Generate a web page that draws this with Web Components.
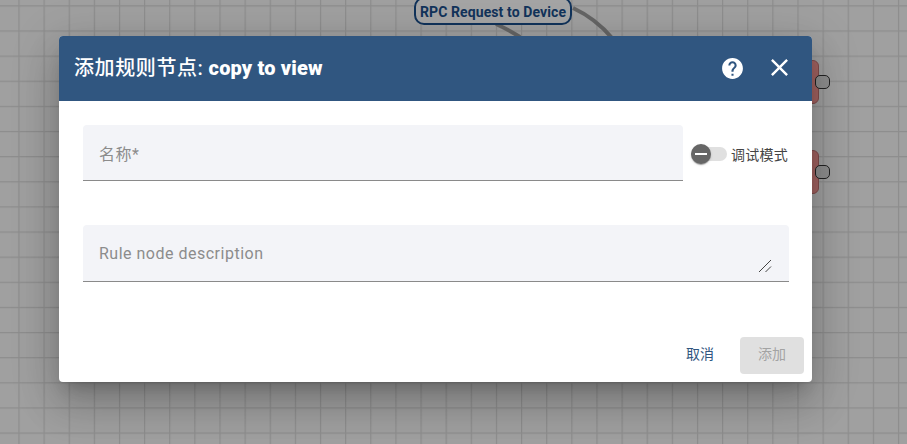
<!DOCTYPE html>
<html>
<head>
<meta charset="utf-8">
<style>
  html, body { margin: 0; padding: 0; width: 907px; height: 444px; overflow: hidden; }
  body { font-family: Roboto, "Noto Sans CJK SC", sans-serif; }
</style>
</head>
<body>
<rule-canvas>
  <add-node-dialog prefix="添加规则节点:" heading="copy to view">
    <text-field label="名称*" slot="name"></text-field>
    <debug-toggle slot="name">调试模式</debug-toggle>
    <text-field label="Rule node description" multiline slot="description"></text-field>
  </add-node-dialog>
</rule-canvas>

<script>
(function () {
  const FONT = 'Roboto, "Noto Sans CJK SC", sans-serif';

  // canvas behind the dialog: grid, the node label, the wires and the two nodes
  class RuleCanvas extends HTMLElement {
    constructor() {
      super();
      this.attachShadow({mode: 'open'}).innerHTML = `
        <style>
          :host { display: block; position: relative; width: 907px; height: 444px; overflow: hidden; background: #ececec; }
          svg { position: absolute; left: 0; top: 0; }
          .label {
            position: absolute; left: 414px; top: -3px; width: 158px; height: 28px; box-sizing: border-box;
            border: 2px solid #1a4c86; border-radius: 10px; background: #f3f3f3; color: #1a4c86;
            font: 700 14px ${FONT}; letter-spacing: .1px; line-height: 26px; text-align: center; white-space: nowrap;
          }
          .node { position: absolute; left: 790px; width: 29px; height: 44px; box-sizing: border-box;
            background: #f1928f; border: 1px solid #c07070; border-radius: 6px; }
          .port { position: absolute; left: 815px; width: 15px; height: 14px; box-sizing: border-box;
            background: #d2d2d2; border: 1.5px solid #333; border-radius: 5px; }
          .scrim { position: absolute; inset: 0; background: rgba(0,0,0,.32); }
          .overlay { position: absolute; inset: 0; display: flex; justify-content: center; align-items: flex-start; padding: 36px 36px 0 0; }
        </style>
        <svg width="907" height="444">
          <defs>
            <pattern id="cell" width="25.13" height="25.13" x="18.4" y="5.3" patternUnits="userSpaceOnUse">
              <path d="M0 .6H25.13M.6 0V25.13" stroke="#d0d0d0" stroke-width="1.2" fill="none"/>
            </pattern>
          </defs>
          <rect width="907" height="444" fill="url(#cell)"/>
          <g fill="none" stroke="#969696" stroke-width="4">
            <path d="M496 24 C505 28 512 32 520 37"/>
            <path d="M573 8 C588 15 602 26 612 38"/>
          </g>
        </svg>
        <div class="label">RPC Request to Device</div>
        <div class="node" style="top:60px"></div>
        <div class="node" style="top:150px"></div>
        <div class="port" style="top:75px"></div>
        <div class="port" style="top:165px"></div>
        <div class="scrim"></div>
        <div class="overlay"><slot></slot></div>
      `;
    }
  }

  class AddNodeDialog extends HTMLElement {
    constructor() {
      super();
      this.attachShadow({mode: 'open'}).innerHTML = `
        <style>
          :host {
            display: block; width: 753px; height: 346px; background: #fff; border-radius: 4px; overflow: hidden;
            box-shadow: 0 11px 15px -7px rgba(0,0,0,.2), 0 24px 38px 3px rgba(0,0,0,.14), 0 9px 46px 8px rgba(0,0,0,.12);
            font-family: ${FONT};
          }
          header {
            height: 65px; background: #305680; color: #fff; display: flex; align-items: center;
            padding: 0 20px 0 15px; box-sizing: border-box;
          }
          h2 { flex: 1; margin: 0; font: 700 20px/28px ${FONT}; letter-spacing: .15px; padding-bottom: 1px; }
          h2 span { font-weight: 500; letter-spacing: .6px; }
          .icons { display: flex; align-items: center; margin-bottom: 2px; }
          .icons svg { display: block; }
          .help { margin-right: 20px; margin-top: 1px; }
          main { padding: 24px 23px 0 24px; display: flex; flex-direction: column; gap: 44px; }
          .row { display: flex; align-items: center; gap: 8px; }
          footer { display: flex; justify-content: flex-end; align-items: center; gap: 8px; padding: 55px 8px 0 0; }
          button { font: 400 14px ${FONT}; border: 0; border-radius: 4px; height: 37px; width: 64px; padding: 0 0 6px; background: none; }
          .cancel { color: #305680; }
          .add { background: #e0e0e0; color: #a3a3a3; }
        </style>
        <header>
          <h2><span></span> <b></b></h2>
          <div class="icons">
            <svg class="help" width="25" height="25" viewBox="0 0 24 24" fill="#fff"><path d="M12 2C6.48 2 2 6.48 2 12s4.48 10 10 10 10-4.48 10-10S17.52 2 12 2zm1 17h-2v-2h2v2zm2.07-7.75l-.9.92C13.45 12.9 13 13.5 13 15h-2v-.5c0-1.100.45-2.100 1.170-2.830l1.240-1.260c.37-.36.59-.86.59-1.410 0-1.100-.9-2-2-2s-2 .9-2 2H8c0-2.210 1.790-4 4-4s4 1.790 4 4c0 .88-.36 1.680-.93 2.250z"/></svg>
            <svg width="29" height="29" viewBox="0 0 24 24" fill="#fff" style="margin-right:-2px"><path d="M19 6.41L17.59 5 12 10.59 6.41 5 5 6.41 10.59 12 5 17.59 6.41 19 12 13.41 17.59 19 19 17.59 13.41 12z"/></svg>
          </div>
        </header>
        <main>
          <div class="row"><slot name="name"></slot></div>
          <slot name="description"></slot>
        </main>
        <footer>
          <button class="cancel">取消</button>
          <button class="add" disabled>添加</button>
        </footer>
      `;
      this.shadowRoot.querySelector('h2 span').textContent = this.getAttribute('prefix');
      this.shadowRoot.querySelector('h2 b').textContent = this.getAttribute('heading');
    }
  }

  class TextField extends HTMLElement {
    constructor() {
      super();
      const multi = this.hasAttribute('multiline');
      this.attachShadow({mode: 'open'}).innerHTML = `
        <style>
          :host {
            display: flex; flex: ${multi ? 'none' : '1'}; min-width: 0; position: relative; box-sizing: border-box; height: ${multi ? 57 : 56}px;
            background: #f3f4f8; border-bottom: 1px solid #8a8a8a; border-radius: 4px 4px 0 0;
            padding: 0 16px; align-items: center;
          }
          span { font: 400 16px/24px ${FONT}; color: #8c8c8c; ${multi ? 'letter-spacing: .5px; margin-top: 1px;' : 'letter-spacing: .5px; margin-top: 4px;'} }
          svg { position: absolute; right: 17px; bottom: 8px; }
        </style>
        <span></span>
        ${multi ? '<svg width="14" height="14" stroke="#444" stroke-width="1" fill="none"><path d="M1 13 13 1M7.500 13 13 7.500"/></svg>' : ''}
      `;
      this.shadowRoot.querySelector('span').textContent = this.getAttribute('label');
    }
  }

  class DebugToggle extends HTMLElement {
    constructor() {
      super();
      this.attachShadow({mode: 'open'}).innerHTML = `
        <style>
          :host { display: flex; align-items: center; flex: none; width: 98px; height: 24px; font: 400 14px ${FONT}; letter-spacing: .25px; color: #444; margin-top: 2px; }
          .track { position: relative; width: 36px; height: 14px; border-radius: 7px; background: #e0e0e0; flex: none; margin-right: 4px; }
          .thumb {
            position: absolute; left: 0; top: -3px; width: 20px; height: 20px; border-radius: 50%; background: #666;
            box-shadow: 0 2px 1px -1px rgba(0,0,0,.2), 0 1px 1px rgba(0,0,0,.14), 0 1px 3px rgba(0,0,0,.12);
            display: flex; align-items: center; justify-content: center;
          }
          .thumb i { display: block; width: 12px; height: 2px; background: #fff; }
        </style>
        <div class="track"><div class="thumb"><i></i></div></div>
        <slot></slot>
      `;
    }
  }

  customElements.define('rule-canvas', RuleCanvas);
  customElements.define('add-node-dialog', AddNodeDialog);
  customElements.define('text-field', TextField);
  customElements.define('debug-toggle', DebugToggle);
})();
</script>
</body>
</html>
